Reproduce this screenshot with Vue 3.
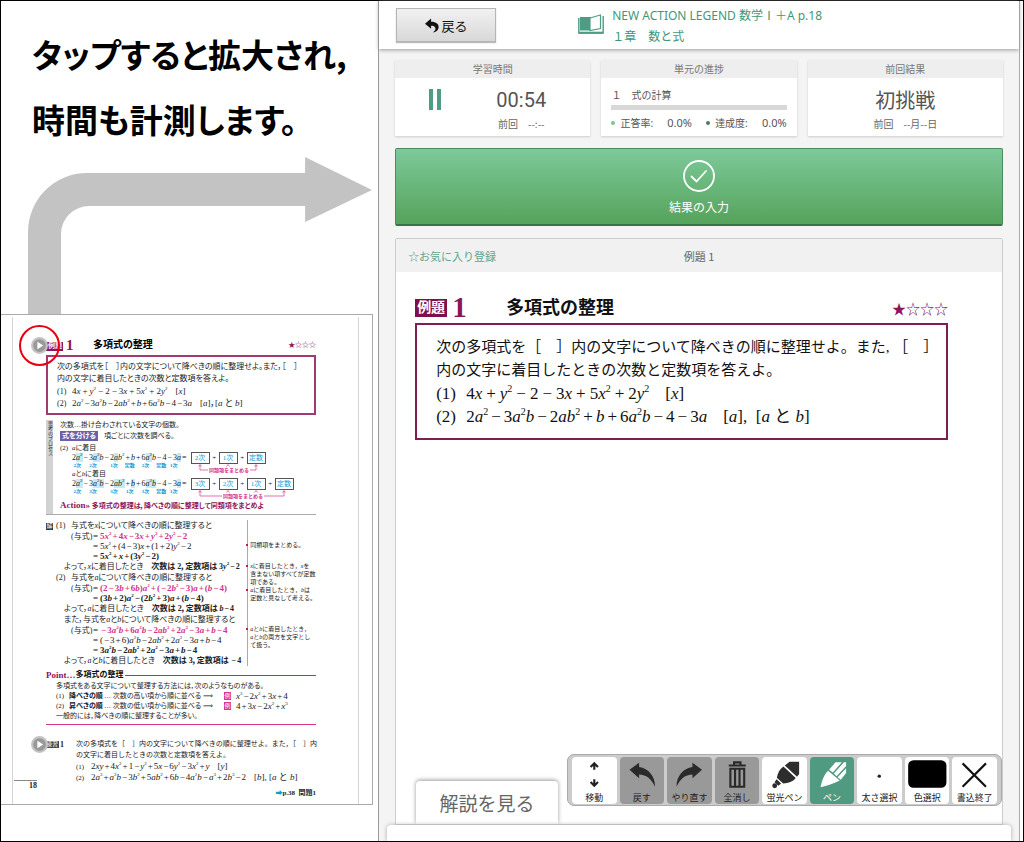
<script setup>
import { h } from 'vue'

// Renders a short formula: a b x y in italics, ^n raised, {..} highlighted.
function parse(src) {
  const out = []
  for (let i = 0; i < src.length; i++) {
    const c = src[i]
    if (c === '^') out.push(h('sup', src[++i]))
    else if (c === '{') {
      const end = src.indexOf('}', i)
      out.push(h('mark', parse(src.slice(i + 1, end))))
      i = end
    } else if ('abxy'.includes(c)) out.push(h('i', c))
    else if ('+−='.includes(c)) out.push(h('span', { class: 'op' }, c))
    else out.push(c)
  }
  return out
}
const M = (props) => h('span', { class: 'm' }, parse(props.t))
M.props = ['t']

const degreeLines = [
  {
    head: 'aに着目',
    terms: [['2{a^2}', '2次'], ['−3{a^2}b', '2次'], ['−2{a}b^2', '1次'], ['+b', '定数'], ['+6{a^2}b', '2次'], ['−4', '定数'], ['−3{a}', '1次']],
    boxes: ['2次', '1次', '定数'],
    width: 62, ends: [3, 59], mids: [31], textX: 12, gap: [11, 53]
  },
  {
    head: 'aとbに着目',
    terms: [['2{a^2}', '2次'], ['−3{a^2b}', '3次'], ['−2{ab^2}', '3次'], ['+{b}', '1次'], ['+6{a^2b}', '3次'], ['−4', '定数'], ['−3{a}', '1次']],
    boxes: ['3次', '2次', '1次', '定数'],
    width: 90, ends: [3, 87], mids: [31, 59], textX: 26, gap: [25, 67]
  }
]

const solution = [
  { k: 'intro', n: '(1)', t: '与式をxについて降べきの順に整理すると' },
  { k: 'eq', l: '(与式)', t: '5x^2+4x−3x+y^2+2y^2−2', c: 'pink' },
  { k: 'eq', t: '5x^2+(4−3)x+(1+2)y^2−2' },
  { k: 'eq', t: '5x^2+x+(3y^2−2)', c: 'bold' },
  { k: 'end', t: 'よって，xに着目したとき', r: '次数は 2，定数項は 3y^2−2' },
  { k: 'intro', n: '(2)', t: '与式をaについて降べきの順に整理すると' },
  { k: 'eq', l: '(与式)', t: '(2−3b+6b)a^2+(−2b^2−3)a+(b−4)', c: 'pink' },
  { k: 'eq', t: '(3b+2)a^2−(2b^2+3)a+(b−4)', c: 'bold' },
  { k: 'end', t: 'よって，aに着目したとき', r: '次数は 2，定数項は b−4' },
  { k: 'end', t: 'また，与式をaとbについて降べきの順に整理すると' },
  { k: 'eq', l: '(与式)', t: '−3a^2b+6a^2b−2ab^2+2a^2−3a+b−4', c: 'pink' },
  { k: 'eq', t: '(−3+6)a^2b−2ab^2+2a^2−3a+b−4' },
  { k: 'eq', t: '3a^2b−2ab^2+2a^2−3a+b−4', c: 'bold' },
  { k: 'end', t: 'よって，aとbに着目したとき', r: '次数は 3，定数項は −4' }
]

const notes = [
  ['同類項をまとめる。'],
  ['xに着目したとき，xを', '含まない項すべてが定数', '項である。'],
  ['aに着目したとき，bは', '定数と見なして考える。'],
  ['aとbに着目したとき，', 'aとbの両方を文字とし', 'て扱う。']
]

const tools = [
  { id: 'move', label: '移動' },
  { id: 'undo', label: '戻す', state: 'off' },
  { id: 'redo', label: 'やり直す', state: 'off' },
  { id: 'trash', label: '全消し', state: 'off' },
  { id: 'marker', label: '蛍光ペン' },
  { id: 'pen', label: 'ペン', state: 'on' },
  { id: 'dot', label: '太さ選択' },
  { id: 'color', label: '色選択' },
  { id: 'close', label: '書込終了' }
]
</script>

<template>
  <div class="screen">
    <section class="guide">
      <h1 class="lead">タップすると拡大され,<br>時間も計測します。</h1>
      <svg class="arrow" viewBox="0 0 344 157" aria-hidden="true">
        <path d="M0 157V75A59 59 0 0 1 59 16H277V0L344 33L277 65V49H61A28 28 0 0 0 33 77V157Z" fill="#c3c3c3" />
      </svg>

      <div class="book">
        <article class="sheet">
          <header class="s-title">
            <button class="play ringed" aria-label="例題1を開く">
              <svg viewBox="0 0 16 16"><circle cx="8" cy="8" r="7" fill="#999" stroke="#c4c4c4" stroke-width="2" /><path d="M6 4.500V11.500L11.500 8Z" fill="#fff" /></svg>
            </button>
            <span class="s-badge">例題</span>
            <span class="s-num">1</span>
            <h2>多項式の整理</h2>
            <span class="s-stars">★☆☆☆</span>
          </header>
          <div class="s-box">
            <p>次の多項式を［　］内の文字について降べきの順に整理せよ。また，［　］</p>
            <p>内の文字に着目したときの次数と定数項を答えよ。</p>
            <p class="wide"><span class="no">(1)</span><M t="4x+y^2−2−3x+5x^2+2y^2" /><M class="ans" t="[x]" /></p>
            <p><span class="no">(2)</span><M t="2a^2−3a^2b−2ab^2+b+6a^2b−4−3a" /><M class="ans" t="[a]，[a と b]" /></p>
          </div>

          <div class="process">
            <div class="side">思考のプロセス</div>
            <div class="p-body">
              <p>次数…掛け合わされている文字の個数。</p>
              <p class="split"><b class="tag">式を分ける</b>項ごとに次数を調べる。</p>
              <div v-for="(d, i) in degreeLines" :key="i" class="degree">
                <p class="d-head"><span class="no">{{ i === 0 ? '(2)' : '' }}</span><M :t="d.head" /></p>
                <div class="d-line">
                  <span v-for="(t, j) in d.terms" :key="j" class="term"><M :t="t[0]" /><small>{{ t[1] }}</small></span>
                  <span class="term"><M t="=" /></span>
                  <div class="d-right">
                    <div class="d-boxes">
                      <template v-for="(b, j) in d.boxes" :key="j">
                        <span v-if="j" class="plus">+</span><span class="cell">{{ b }}</span>
                      </template>
                    </div>
                    <svg class="bracket" :width="d.width" height="9" :viewBox="`0 0 ${d.width} 9`">
                      <g fill="none" stroke="#d6348c" stroke-width="0.700">
                        <path :d="`M${d.ends[0]} 1V6H${d.gap[0]}M${d.gap[1]} 6H${d.ends[1]}V1`" />
                        <path v-for="x in [...d.ends, ...d.mids]" :key="x" :d="`M${x - 1.500} 2.500L${x} 0.500L${x + 1.500} 2.500`" />
                      </g>
                      <text :x="d.textX" y="8" font-size="5" font-weight="700" fill="#d6348c">同類項をまとめる</text>
                    </svg>
                  </div>
                </div>
              </div>
              <p class="action"><span class="latin">Action»</span> 多項式の整理は，降べきの順に整理して同類項をまとめよ</p>
            </div>
          </div>

          <div class="solve">
            <div class="steps">
              <div v-for="(s, i) in solution" :key="i" :class="['step', s.k]">
                <template v-if="s.k === 'eq'">
                  <span class="lhs">{{ s.l }}</span><M class="eqs" t="=" /><M :class="s.c" :t="s.t" />
                </template>
                <template v-else>
                  <span v-if="s.n" class="mark-col"><span v-if="i === 0" class="kai">解</span></span>
                  <span v-if="s.n" class="no">{{ s.n }}</span>
                  <M :t="s.t" /><M v-if="s.r" class="bold result" :t="s.r" />
                </template>
              </div>
            </div>
            <aside class="notes">
              <div v-for="(n, i) in notes" :key="i" :class="['note', 'note' + i]">
                <p v-for="l in n" :key="l"><M :t="l" /></p>
              </div>
            </aside>
          </div>

          <section class="point">
            <h3><span class="latin">Point…</span>多項式の整理<i class="rule"></i></h3>
            <div class="point-body">
              <p>多項式をある文字について整理する方法には，次のようなものがある。</p>
              <p class="row"><span class="no">(1)</span><b>降べきの順</b><span class="txt">… 次数の高い項から順に並べる</span><span class="to">⟹</span><span class="ex">例</span><M t="x^3−2x^2+3x+4" /></p>
              <p class="row"><span class="no">(2)</span><b>昇べきの順</b><span class="txt">… 次数の低い項から順に並べる</span><span class="to">⟹</span><span class="ex">例</span><M t="4+3x−2x^2+x^3" /></p>
              <p>一般的には，降べきの順に整理することが多い。</p>
            </div>
          </section>

          <section class="practice">
            <button class="play" aria-label="練習1を開く">
              <svg viewBox="0 0 16 16"><circle cx="8" cy="8" r="7" fill="#999" stroke="#c4c4c4" stroke-width="2" /><path d="M6 4.500V11.500L11.500 8Z" fill="#fff" /></svg>
            </button>
            <span class="pr-badge">練習</span><b class="pr-num">1</b>
            <div class="pr-body">
              <p>次の多項式を［　］内の文字について降べきの順に整理せよ。また，［　］内</p>
              <p>の文字に着目したときの次数と定数項を答えよ。</p>
              <p><span class="no">(1)</span><M t="2xy+4x^2+1−y^2+5x−6y^2−3x^2+y" /><M class="ans" t="[y]" /></p>
              <p><span class="no">(2)</span><M t="2a^3+a^2b−3b^2+5ab^2+6b−4a^2b−a^3+2b^3−2" /><M class="ans" t="[b], [a と b]" /></p>
            </div>
          </section>
          <footer class="s-foot">
            <span class="pageno">18</span>
            <span class="ref"><span class="go">➡</span>p.38&nbsp; 問題1</span>
          </footer>
        </article>
      </div>
    </section>

    <main class="app">
      <header class="bar">
        <button class="back">
          <svg viewBox="0 0 16 16" width="15" height="15" aria-hidden="true"><path d="M0 6L6.500 0.500V4C12 4 15 6.500 14.500 10.500C14.200 13.200 11.500 15.200 8.500 15.500C11 13.500 11.500 12 11 10.500C10.500 8.800 9 8.200 6.500 8.200V11.500Z" fill="#111" /></svg>
          戻る
        </button>
        <svg class="bookicon" viewBox="0 0 26 21" aria-hidden="true">
          <rect x="2" y="3" width="10" height="13" fill="#4f9c84" />
          <path d="M12 4L22.500 1V14.500L12 16.500ZM2.500 3.500H12V16H2.500Z" fill="none" stroke="#4f9c84" stroke-width="1.200" />
          <path d="M0.800 4V19H25.200V2" fill="none" stroke="#4f9c84" stroke-width="1.400" />
          <path d="M1 18.700H25" stroke="#4f9c84" stroke-width="2" />
        </svg>
        <div class="titles">
          <div>NEW ACTION LEGEND 数学Ⅰ＋A p.18</div>
          <div>１章　数と式</div>
        </div>
      </header>

      <div class="cards">
        <section class="card">
          <h2>学習時間</h2>
          <div class="time">
            <button class="pause" aria-label="一時停止"><i></i><i></i></button>
            <div class="clock"><div class="big">00:54</div><div class="sub">前回　--:--</div></div>
          </div>
        </section>
        <section class="card">
          <h2>単元の進捗</h2>
          <div class="progress">
            <div class="unit">１　式の計算</div>
            <div class="track"></div>
            <div class="rates">
              <span class="rate"><i class="dot light"></i>正答率:</span><span class="pct">0.0%</span>
              <span class="rate"><i class="dot dark"></i>達成度:</span><span class="pct">0.0%</span>
            </div>
          </div>
        </section>
        <section class="card">
          <h2>前回結果</h2>
          <div class="last"><div class="big">初挑戦</div><div class="sub">前回　--月--日</div></div>
        </section>
      </div>

      <button class="submit">
        <svg viewBox="0 0 34 34" width="34" height="34" aria-hidden="true"><circle cx="17" cy="17" r="15" fill="none" stroke="#fff" stroke-width="1.800" /><path d="M9.500 17.500L14.500 22.500L24 12" fill="none" stroke="#fff" stroke-width="1.800" stroke-linecap="round" /></svg>
        結果の入力
      </button>

      <section class="question">
        <header class="q-head">
          <button class="fav">☆お気に入り登録</button>
          <span class="q-name">例題 1</span>
          <span></span>
        </header>
        <article class="q-body">
          <div class="q-title">
            <span class="badge">例題</span>
            <span class="num">1</span>
            <h2>多項式の整理</h2>
            <span class="stars">★☆☆☆</span>
          </div>
          <div class="q-box">
            <p>次の多項式を［　］内の文字について降べきの順に整理せよ。また, ［　］</p>
            <p>内の文字に着目したときの次数と定数項を答えよ。</p>
            <p class="wide"><span class="no">(1)</span><M t="4x+y^2−2−3x+5x^2+2y^2" /><M class="ans" t="[x]" /></p>
            <p><span class="no">(2)</span><M t="2a^2−3a^2b−2ab^2+b+6a^2b−4−3a" /><M class="ans" t="[a],  [a と b]" /></p>
          </div>
        </article>
        <footer class="q-foot">
          <button class="tab">解説を見る</button>
          <div class="tools">
            <button v-for="t in tools" :key="t.id" :class="['tool', t.state]">
              <svg viewBox="0 0 40 32" aria-hidden="true">
                <g v-if="t.id === 'move'" fill="none" stroke="#222" stroke-width="2"><path d="M20 12V6M16.500 9.500L20 6L23.500 9.500M20 21V27M16.500 23.500L20 27L23.500 23.500" /></g>
                <path v-else-if="t.id === 'undo'" d="M8 12L17 5.500V9.500C26 11 32 18 32 28C28 20 24 17 17 16.500V20Z" fill="#2a2a2a" />
                <path v-else-if="t.id === 'redo'" d="M32 12L23 5.500V9.500C14 11 8 18 8 28C12 20 16 17 23 16.500V20Z" fill="#2a2a2a" />
                <g v-else-if="t.id === 'trash'" fill="none" stroke="#2a2a2a" stroke-width="2"><path d="M12 8H28M17 7V5H23V7" /><path d="M13.500 11V28H26.500V11Z" /><path d="M17.900 11V28M22.100 11V28" /></g>
                <g v-else-if="t.id === 'marker'" fill="#2d2d2d"><path d="M20.500 8L25 4.500H34V16L32 18.500Z" /><path d="M19.200 9L30.800 19.800C28 23.500 24 24.500 19 25L13 19.500C14 15 15.500 11.500 19.200 9Z" /><path d="M12.800 21L17 25L14.500 27L10.800 23.800Z" /><circle cx="11" cy="27" r="2.300" /></g>
                <g v-else-if="t.id === 'pen'" fill="#fff"><path d="M16 13L27 22C21 25 15 27 9 28.500C10 23 12 17 16 13Z" /><path d="M17 12L23 5H29L20.500 14.500ZM21.500 15.500L31 5H33V8.500L24 18ZM25 19L33 10.500V15L28 21.500Z" /></g>
                <circle v-else-if="t.id === 'dot'" cx="20" cy="18" r="1.600" fill="#222" />
                <rect v-else-if="t.id === 'color'" x="2" y="3" width="36" height="26" rx="5" />
                <path v-else d="M9 6L31 28M31 6L9 28" stroke="#111" stroke-width="2" />
              </svg>
              <span>{{ t.label }}</span>
            </button>
          </div>
        </footer>
      </section>
      <div class="drawer"></div>
    </main>
  </div>
</template>

<style>
html, body { margin: 0; background: #fff; }
</style>

<style scoped>
* { box-sizing: border-box; }
h1, h2, h3, p { margin: 0; font-weight: inherit; font-size: inherit; }
button { font: inherit; color: inherit; padding: 0; border: 0; background: none; cursor: pointer; }
.screen {
  display: flex;
  min-height: 100vh;
  border: 1px solid #000;
  background: #fff;
  color: #111;
  font-family: "Noto Sans CJK JP", sans-serif;
}
:deep(i) { font-style: italic; }
:deep(sup) { line-height: 0; vertical-align: super; font-size: 5px; }
:deep(mark) { background: #c5e9f6; color: inherit; }
.m { font-size: 9px; }

/* left side */
.guide { flex: 0 0 37%; min-width: 0; display: flex; flex-direction: column; border-right: 1px solid #999; }
.lead {
  padding: 21px 0 1px 31px;
  font-size: 33px;
  line-height: 65px;
  font-weight: 700;
  font-feature-settings: "palt";
  white-space: nowrap;
  color: #000;
}
.arrow { width: auto; margin: 4px 6px 0 27px; display: block; }
.book { margin-right: 5px; border: 1px solid #aaa; border-left: 0; padding: 0 13px 0 11px; }
.sheet {
  margin-top: 2px;
  padding: 18px 42px 6px 33px;
  border: 1px solid #d5d5d5;
  border-width: 0 1px;
  font-family: "Liberation Serif", "Noto Sans CJK JP", serif;
  font-size: 8px;
  line-height: 12px;
  font-feature-settings: "palt";
  white-space: nowrap;
  color: #222;
}
.no { display: inline-block; width: 15px; }
.ans { margin-left: 8px; }
.s-title { position: relative; display: flex; align-items: center; height: 20px; }
.play { position: absolute; left: -15px; top: 2px; width: 17px; height: 17px; border-radius: 50%; }
.play svg { display: block; width: 100%; height: 100%; }
.ringed::after { content: ""; position: absolute; inset: -12px; border: 2px solid #e60012; border-radius: 50%; }
.s-badge { margin-top: 2px; padding: 0 1px 0 2px; background: #8c1458; color: #fff; font-weight: 700; font-size: 7px; line-height: 9px; }
.s-num { margin-left: 3px; width: 27px; font-size: 15px; font-weight: 700; color: #8c1458; }
.s-title h2 { font-size: 10px; font-weight: 700; color: #000; }
.s-stars { margin-left: auto; font-size: 7px; color: #8c1458; font-feature-settings: normal; }
.s-box { border: 2px solid #a03a70; padding: 4px 0 4px 9px; }
.s-box p { height: 12px; }
.wide { --gap: 2px; }
.m :deep(.op) { margin: 0 var(--gap, 1px); }
.process { display: flex; margin-top: 5px; border-bottom: 1px solid #aaa; }
.side { flex: 0 0 7px; background: #d2d2d2; writing-mode: vertical-rl; font-size: 5px; line-height: 7px; padding-top: 1px; }
.p-body { padding: 0 0 2px 7px; font-size: 7px; line-height: 11px; }
.p-body p { height: 11px; }
.p-body .split { margin-bottom: 1px; }
.tag { margin-right: 6px; padding: 0 2px; background: #6c60a8; color: #fff; line-height: 10px; display: inline-block; }
.p-body .m { font-size: 8px; }
.p-body .d-head { height: 10px; line-height: 10px; }
.d-head .m { font-size: 7px; }
.degree .no { width: 12px; }
.d-line { display: flex; padding-left: 12px; height: 16px; }
.term { display: flex; flex-direction: column; align-items: center; line-height: 10px; }
.term small { font-size: 5px; line-height: 6px; font-weight: 700; color: #0a9bd8; }
.d-right { margin-top: -1px; padding-left: 3px; }
.d-boxes { display: flex; align-items: center; }
.cell { width: 19px; border: 1px solid #555; color: #0a9bd8; text-align: center; line-height: 10px; height: 12px; font-size: 7px; }
.plus { width: 9px; text-align: center; }
.bracket { display: block; margin-left: 6px; font-family: "Noto Sans CJK JP", sans-serif; font-feature-settings: normal; }
.p-body .action { height: 13px; margin-top: 4px; font-weight: 700; color: #8c1458; line-height: 13px; }
.latin { font-size: 9px; font-weight: 700; color: #8c1458; }
.solve { display: flex; padding-top: 5px; }
.steps { flex: 1 1 0; min-width: 0; border-right: 1px solid #aaa; }
.step { display: flex; align-items: baseline; height: 11px; line-height: 11px; }
.step .m { font-size: 8px; }
.step.eq { height: 10px; line-height: 10px; padding-left: 25px; }
.step.eq .m { font-size: 9px; }
.step.end { padding-left: 18px; }
.lhs { width: 21px; }
.step .eqs { width: 8px; }
.mark-col { width: 10px; }
.step .no { width: 15px; }
.kai { display: inline-block; width: 7px; background: #333; color: #fff; font-size: 6px; line-height: 7px; text-align: center; }
.pink { color: #d6348c; font-weight: 700; }
.bold { font-weight: 700; }
.result { margin-left: 8px; }
.notes { flex: 0 0 68px; padding: 21px 0 0 2px; font-size: 6px; line-height: 8px; font-feature-settings: normal; }
.notes .m { font-size: 6px; }
.note { position: relative; }
.note::before { content: ""; position: absolute; left: -4px; top: 3px; width: 2px; height: 2px; background: #c2185b; }
.note1 { margin-top: 13px; }
.note3 { margin-top: 23px; }
.point { margin-top: 3px; border-bottom: 1px solid #d6348c; padding-bottom: 3px; }
.point h3 { display: flex; align-items: center; height: 12px; font-weight: 700; color: #111; }
.rule { flex: 1; height: 1px; margin-left: 2px; background: #a03a70; }
.point-body { padding-left: 10px; font-size: 7px; line-height: 10px; }
.point-body p { height: 10px; }
.row { display: flex; }
.row .no { width: 13px; }
.row b { width: 35px; }
.txt { width: 99px; }
.to { width: 21px; }
.ex { width: 7px; margin: 1px 5px 1px 0; background: #d6348c; color: #fff; font-size: 6px; line-height: 8px; text-align: center; }
.practice { position: relative; display: flex; align-items: flex-start; margin-top: 14px; line-height: 11px; }
.practice .play { top: -3px; }
.pr-badge { margin-top: 2px; background: #444; color: #fff; font-size: 6px; line-height: 7px; padding-right: 1px; }
.pr-num { padding-left: 1px; margin-right: auto; }
.pr-body { flex: none; font-size: 7px; font-feature-settings: normal; margin-right: -1px; }
.pr-body p { height: 11px; }
.s-foot { position: relative; display: flex; justify-content: flex-end; padding-top: 5px; font-size: 7px; font-weight: 700; line-height: 10px; }
.pageno { position: absolute; left: -32px; top: -3px; width: 23px; border-top: 1px solid #888; text-align: right; font-size: 8px; }
.go { color: #0a9bd8; font-size: 7px; }

/* right side */
.app {
  flex: 1 1 0;
  min-width: 0;
  display: flex;
  flex-direction: column;
  margin-right: 3px;
  border-right: 1px solid #aaa;
  background: #f4f4f4;
}
.bar { display: flex; align-items: flex-start; height: 48px; padding: 7px 17px; background: #fff; box-shadow: 0 1px 4px #999; }
.back {
  display: flex; align-items: center; justify-content: center; gap: 2px;
  width: 100px; height: 34px;
  border: 1px solid #b5b5b5;
  background: linear-gradient(#f1f1f1, #d8d8d8);
  box-shadow: 0 1px 1px #bbb;
  font-size: 13px;
}
.bookicon { width: 26px; height: 21px; margin: 6px 8px 0 82px; }
.titles { margin-top: -3px; font-family: "Noto Sans", "Noto Sans CJK JP", sans-serif; font-size: 12px; line-height: 21px; color: #3f967a; white-space: nowrap; }
.cards { display: grid; grid-template-columns: repeat(3, 1fr); gap: 11px; margin: 11px 16px 0 16px; }
.card { background: #fff; box-shadow: 0 1px 2px #ccc; color: #555; height: 76px; }
.card h2 { height: 18px; background: #eee; font-size: 10px; line-height: 18px; text-align: center; color: #777; }
.time { display: flex; }
.pause { display: flex; gap: 4px; margin: 11px 0 0 34px; height: 21px; }
.pause i { width: 4px; height: 21px; background: #4f9c84; }
.clock { flex: 1; text-align: center; padding-right: 15px; margin-left: 26px; }
.big { font-size: 20px; line-height: 26px; padding-top: 9px; }
.clock .big { font-family: Roboto, sans-serif; }
.sub { font-size: 10px; line-height: 16px; margin-top: 3px; color: #666; }
.last { text-align: center; }
.progress { padding: 0 10px; font-size: 10px; }
.unit { line-height: 15px; padding-top: 9px; height: 27px; }
.track { height: 5px; background: #d8d8d8; }
.rates { display: flex; justify-content: space-between; align-items: center; line-height: 14px; margin-top: 6px; white-space: nowrap; font-family: "Noto Sans", "Noto Sans CJK JP", sans-serif; }
.pct { font-size: 11px; }
.rate { display: flex; align-items: center; gap: 5px; }
.dot { width: 4px; height: 4px; border-radius: 50%; background: #7cc48c; }
.dot.dark { background: #4a7d5a; }
.submit {
  display: flex; flex-direction: column; align-items: center;
  margin: 12px 16px 0; height: 78px; padding-top: 10px;
  border: 1px solid #4a8c5c; border-bottom: 2px solid #37724a; border-radius: 2px;
  background: linear-gradient(#7cc99a, #56a35c);
  color: #fff; font-size: 12px; line-height: 27px;
}
.question { flex: 1; display: flex; flex-direction: column; margin: 12px 16px 0; border: 1px solid #ccc; border-radius: 2px 2px 0 0; background: #fff; }
.q-head { display: grid; grid-template-columns: 1fr auto 1fr; align-items: center; height: 33px; padding: 0 12px; background: #f1f1f1; }
.fav { justify-self: start; font-size: 11px; color: #5fa58e; }
.q-name { font-size: 11px; color: #666; }
.q-body { padding: 20px 54px 0 19px; flex: 1; font-family: "Liberation Serif", "Noto Sans CJK JP", serif; }
.q-title { display: flex; align-items: center; height: 31px; }
.badge { margin-top: 1px; padding: 0 2px; background: #7d0f4b; color: #fff; font-size: 14px; font-weight: 700; line-height: 18px; }
.num { width: 59px; padding-left: 5px; font-size: 29px; line-height: 29px; font-weight: 700; color: #8c1458; }
.q-title h2 { font-size: 18px; font-weight: 700; line-height: 24px; }
.stars { margin-left: auto; font-size: 14px; color: #8c1458; }
.q-box { border: 2px solid #7d1f52; padding: 11px 0 10px 19px; font-size: 15px; line-height: 23px; white-space: pre; }
.q-box p { height: 23px; }
.q-box .m { font-size: 17px; --gap: 3px; }
.q-box .wide .m { --gap: 4px; }
.q-box .m :deep(sup) { font-size: 10px; }
.q-box .no { width: 30px; font-size: 17px; }
.q-box .ans { margin-left: 16px; }
.q-foot { display: flex; align-items: flex-start; justify-content: space-between; padding-left: 20px; }
.tab {
  flex: 0 1 142px; height: 43px; margin-top: 27px;
  border-radius: 4px 4px 0 0; background: #fff; box-shadow: 0 -1px 4px #999;
  font-size: 19px; color: #666; white-space: nowrap;
  clip-path: inset(-6px -6px 0 -6px);
}
.tools { display: grid; grid-template-columns: repeat(9, 1fr); gap: 3px; flex: 0 1 435px; height: 52px; padding: 2px 4px 1px 4px; border: 1px solid #aaa; border-radius: 7px; background: #ccc; }
.tool { display: flex; flex-direction: column; align-items: center; border-radius: 4px; background: #fff; font-size: 9px; line-height: 13px; color: #222; white-space: nowrap; }
.tool svg { width: 100%; height: 34px; }
.tool.off { background: #999; }
.tool.on { background: #4f9a80; color: #fff; }
.drawer { height: 16px; margin: 0 8px; border-radius: 4px 4px 0 0; background: #fff; box-shadow: 0 0 4px #aaa; clip-path: inset(-4px -4px 0 -4px); }
</style>
